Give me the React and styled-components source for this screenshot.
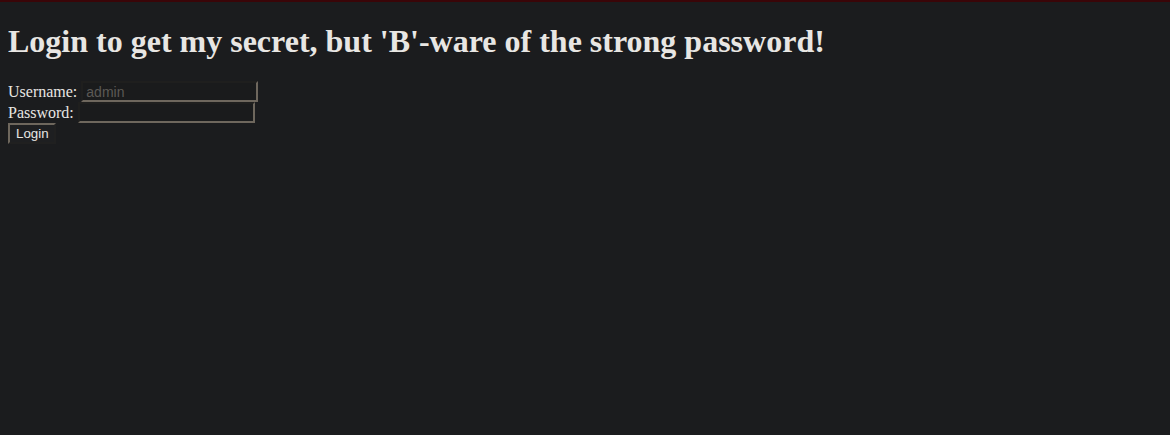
import React from 'react';
import styled, { createGlobalStyle } from 'styled-components';

const GlobalStyle = createGlobalStyle`
    html {
        background-color: #1b1c1e;
        border-top: 2px solid #3a0508;
    }
    body {
        margin: 8px;
        background-color: #1b1c1e;
        color: #e8e6e3;
        font-family: "Liberation Serif", "Times New Roman", serif;
        font-size: 16px;
    }
`;

const Title = styled.h1`
    margin: 13px 0 21px;
    font-size: 32px;
    font-weight: bold;
    line-height: 37px;
    color: #e8e6e3;
`;

const Form = styled.form`
    margin: 0;
    line-height: 18px;
`;

const Field = styled.div`
    display: flex;
    align-items: center;
    height: 21px;
`;

const Label = styled.label`
    margin-right: 4px;
`;

const Input = styled.input`
    box-sizing: border-box;
    width: 177px;
    height: 21px;
    padding: 1px 3px;
    background-color: #1a1b1c;
    color: #e8e6e3;
    border: 2px solid;
    border-color: #1f1f1e #6e675d #6e675d #1f1f1e;
    font-family: "Liberation Sans", Arial, sans-serif;
    font-size: 14px;
    outline: none;

    &::placeholder {
        color: #5c5955;
    }
`;

const Button = styled.button`
    box-sizing: border-box;
    width: 48px;
    height: 21px;
    padding: 1px 6px;
    background-color: #1e1f21;
    color: #e8e6e3;
    border: 2px solid;
    border-color: #6e675d #202020 #202020 #6e675d;
    font-family: "Liberation Sans", Arial, sans-serif;
    font-size: 13.33px;
    text-align: left;
    cursor: pointer;
`;

const App = () => {
    return (
        <>
            <GlobalStyle />
            <Title>Login to get my secret, but 'B'-ware of the strong password!</Title>
            <Form onSubmit={(e) => e.preventDefault()}>
                <Field>
                    <Label>Username:</Label>
                    <Input type="text" placeholder="admin" />
                </Field>
                <Field>
                    <Label>Password:</Label>
                    <Input type="password" />
                </Field>
                <Field>
                    <Button type="submit">Login</Button>
                </Field>
            </Form>
        </>
    );
};

export default App;
